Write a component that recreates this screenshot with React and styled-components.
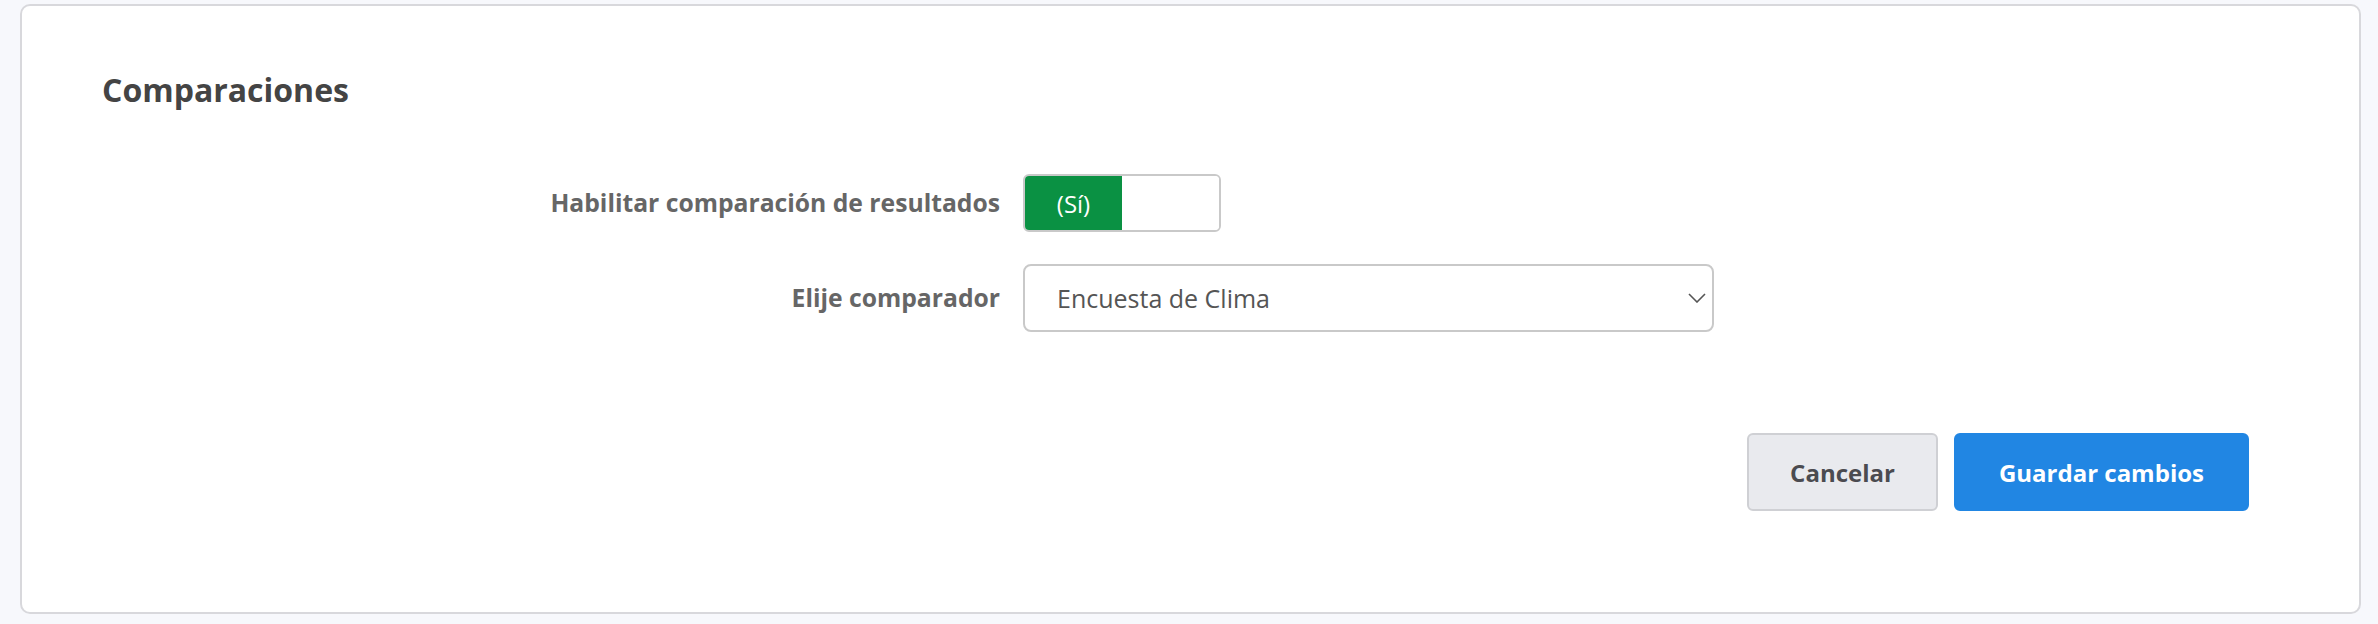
import React, { useState } from "react";
import styled, { createGlobalStyle } from "styled-components";

const GlobalStyle = createGlobalStyle`
  html, body {
    margin: 0;
    padding: 0;
    background: #f7f8fc;
  }
  body {
    font-family: "Open Sans", "Liberation Sans", sans-serif;
  }
`;

const Page = styled.div`
  box-sizing: border-box;
  width: 2378px;
  height: 624px;
  padding: 4px 17px 10px 20px;
`;

const Card = styled.section`
  box-sizing: border-box;
  height: 610px;
  background: #fff;
  border: 2px solid #d8d8dc;
  border-radius: 10px;
  padding: 64px 80px 0 80px;
`;

const Title = styled.h2`
  margin: 0 0 64px;
  font-size: 32px;
  line-height: 40px;
  font-weight: 700;
  color: #444;
`;

const Form = styled.div`
  display: grid;
  grid-template-columns: 898px auto;
  column-gap: 23px;
  row-gap: 32px;
  align-items: center;
`;

const Label = styled.label`
  text-align: right;
  font-size: 24.7px;
  line-height: 1;
  font-weight: 700;
  color: #666;
`;

const Toggle = styled.button`
  display: flex;
  box-sizing: border-box;
  width: 198px;
  height: 58px;
  padding: 0;
  border: 2px solid #c9c9c9;
  border-radius: 6px;
  overflow: hidden;
  background: #fff;
  cursor: pointer;
`;

const ToggleHalf = styled.span`
  display: flex;
  align-items: center;
  justify-content: center;
  width: 50%;
  height: 100%;
  background: ${(p) => (p.$on ? "#0a9143" : "#fff")};
  color: #fff;
  font-family: "Open Sans", sans-serif;
  font-size: 24px;
`;

const SelectWrap = styled.div`
  position: relative;
  width: 691px;
  height: 68px;
`;

const Select = styled.select`
  box-sizing: border-box;
  width: 100%;
  height: 100%;
  appearance: none;
  border: 2px solid #c9c9c9;
  border-radius: 8px;
  padding: 0 40px 0 32px;
  background: #fff;
  font-family: "Open Sans", sans-serif;
  font-size: 25px;
  color: #555;
`;

const Chevron = styled.svg`
  position: absolute;
  right: 8px;
  top: 50%;
  transform: translateY(-50%);
  pointer-events: none;
`;

const Actions = styled.div`
  display: flex;
  justify-content: flex-end;
  gap: 16px;
  margin-top: 101px;
  padding-right: 30px;
`;

const Button = styled.button`
  box-sizing: border-box;
  height: 78px;
  padding: 0 ${(p) => (p.$primary ? "43px" : "41px")};
  border-radius: 6px;
  font-family: "Open Sans", sans-serif;
  font-size: 24px;
  font-weight: 700;
  cursor: pointer;
  background: ${(p) => (p.$primary ? "#2186e3" : "#e9eaee")};
  border: 2px solid ${(p) => (p.$primary ? "#2186e3" : "#cfd0d4")};
  color: ${(p) => (p.$primary ? "#fff" : "#4b4b50")};
`;

export default function App() {
  const [enabled, setEnabled] = useState(true);

  return (
    <Page>
      <GlobalStyle />
      <Card>
        <Title>Comparaciones</Title>
        <Form>
          <Label>Habilitar comparación de resultados</Label>
          <div>
            <Toggle onClick={() => setEnabled(!enabled)}>
              <ToggleHalf $on={enabled}>{enabled ? "(Sí)" : ""}</ToggleHalf>
              <ToggleHalf $on={false} />
            </Toggle>
          </div>
          <Label>Elije comparador</Label>
          <SelectWrap>
            <Select defaultValue="clima">
              <option value="clima">Encuesta de Clima</option>
            </Select>
            <Chevron width="18" height="10" viewBox="0 0 18 10" fill="none">
              <path d="M1 1l8 8 8-8" stroke="#555" strokeWidth="1.6" />
            </Chevron>
          </SelectWrap>
        </Form>
        <Actions>
          <Button>Cancelar</Button>
          <Button $primary>Guardar cambios</Button>
        </Actions>
      </Card>
    </Page>
  );
}
